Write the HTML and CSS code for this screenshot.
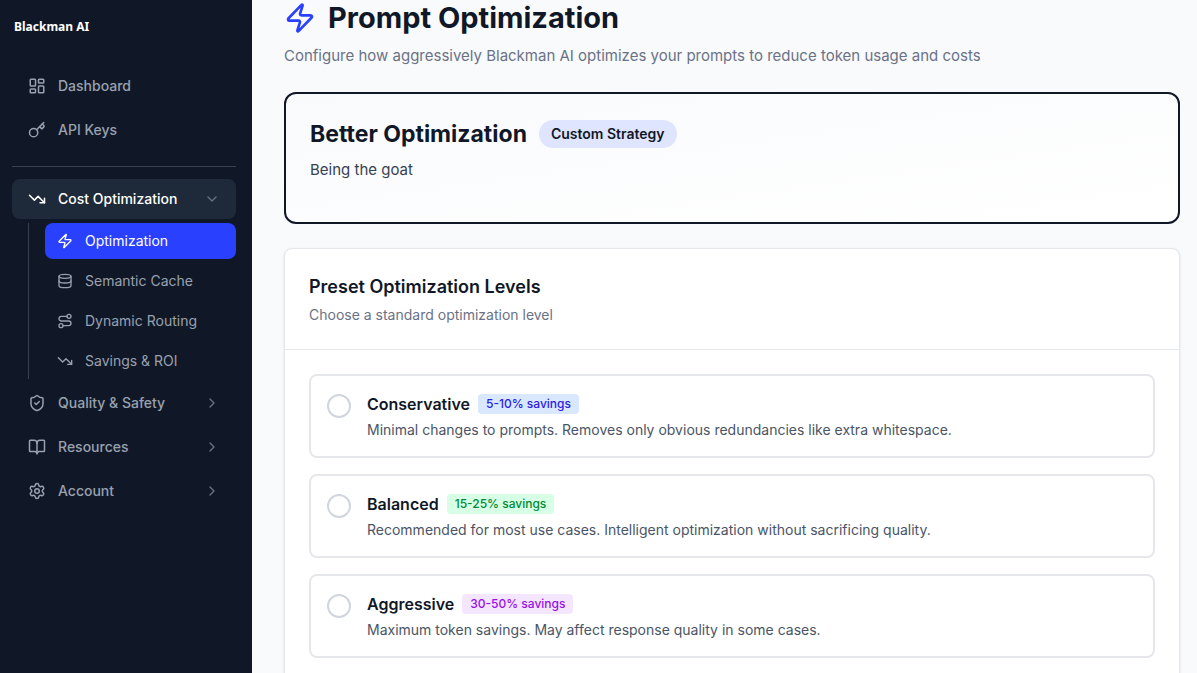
FILE: index.html
```html
<!DOCTYPE html>
<html lang="en">
<head>
<meta charset="utf-8">
<meta name="viewport" content="width=device-width, initial-scale=1">
<title>Prompt Optimization - Blackman AI</title>
<link rel="stylesheet" href="styles.css">
</head>
<body>
<div class="app">
  <aside class="sidebar">
    <a class="brand" href="#">Blackman AI</a>
    <nav class="nav" aria-label="Main">
      <a class="nav-item" href="#">
        <svg class="icon" viewBox="0 0 24 24"><rect x="3" y="3" width="7" height="9" rx="1"/><rect x="14" y="3" width="7" height="5" rx="1"/><rect x="14" y="12" width="7" height="9" rx="1"/><rect x="3" y="16" width="7" height="5" rx="1"/></svg>
        <span>Dashboard</span>
      </a>
      <a class="nav-item" href="#">
        <svg class="icon" viewBox="0 0 24 24"><path d="m15.5 7.5 2.3 2.3a1 1 0 0 0 1.4 0l2.1-2.1a1 1 0 0 0 0-1.4L19 4"/><path d="m21 2-9.6 9.6"/><circle cx="7.5" cy="15.500" r="5.500"/></svg>
        <span>API Keys</span>
      </a>
      <hr class="divider">
      <button class="nav-item open" type="button" aria-expanded="true">
        <svg class="icon" viewBox="0 0 24 24"><path d="M16 17h6v-6"/><path d="m22 17-8.500-8.500-5 5L2 7"/></svg>
        <span>Cost Optimization</span>
        <svg class="icon chevron" viewBox="0 0 24 24"><path d="m6 9 6 6 6-6"/></svg>
      </button>
      <div class="subnav">
        <a class="sub-item active" href="#" aria-current="page">
          <svg class="icon" viewBox="0 0 24 24"><path d="M4 14a1 1 0 0 1-.78-1.630l9.900-10.200a.5.5 0 0 1 .86.46l-1.920 6.020A1 1 0 0 0 13 10h7a1 1 0 0 1 .78 1.630l-9.900 10.200a.5.5 0 0 1-.86-.46l1.920-6.020A1 1 0 0 0 11 14z"/></svg>
          <span>Optimization</span>
        </a>
        <a class="sub-item" href="#">
          <svg class="icon" viewBox="0 0 24 24"><ellipse cx="12" cy="5" rx="9" ry="3"/><path d="M3 5v14a9 3 0 0 0 18 0V5"/><path d="M3 12a9 3 0 0 0 18 0"/></svg>
          <span>Semantic Cache</span>
        </a>
        <a class="sub-item" href="#">
          <svg class="icon" viewBox="0 0 24 24"><circle cx="6" cy="19" r="3"/><path d="M9 19h8.500a3.500 3.500 0 0 0 0-7h-11a3.500 3.500 0 0 1 0-7H15"/><circle cx="18" cy="5" r="3"/></svg>
          <span>Dynamic Routing</span>
        </a>
        <a class="sub-item" href="#">
          <svg class="icon" viewBox="0 0 24 24"><path d="M16 17h6v-6"/><path d="m22 17-8.500-8.500-5 5L2 7"/></svg>
          <span>Savings &amp; ROI</span>
        </a>
      </div>
      <button class="nav-item" type="button" aria-expanded="false">
        <svg class="icon" viewBox="0 0 24 24"><path d="M20 13c0 5-3.500 7.500-7.660 8.950a1 1 0 0 1-.67-.01C7.500 20.500 4 18 4 13V6a1 1 0 0 1 1-1c2 0 4.500-1.200 6.240-2.720a1.170 1.170 0 0 1 1.520 0C14.510 3.810 17 5 19 5a1 1 0 0 1 1 1z"/><path d="m9 12 2 2 4-4"/></svg>
        <span>Quality &amp; Safety</span>
        <svg class="icon chevron" viewBox="0 0 24 24"><path d="m9 18 6-6-6-6"/></svg>
      </button>
      <button class="nav-item" type="button" aria-expanded="false">
        <svg class="icon" viewBox="0 0 24 24"><path d="M12 7v14"/><path d="M3 18a1 1 0 0 1-1-1V4a1 1 0 0 1 1-1h5a4 4 0 0 1 4 4 4 4 0 0 1 4-4h5a1 1 0 0 1 1 1v13a1 1 0 0 1-1 1h-6a3 3 0 0 0-3 3 3 3 0 0 0-3-3z"/></svg>
        <span>Resources</span>
        <svg class="icon chevron" viewBox="0 0 24 24"><path d="m9 18 6-6-6-6"/></svg>
      </button>
      <button class="nav-item" type="button" aria-expanded="false">
        <svg class="icon" viewBox="0 0 24 24"><path d="M9.671 4.136a2.340 2.340 0 0 1 4.659 0 2.340 2.340 0 0 0 3.319 1.915 2.340 2.340 0 0 1 2.330 4.033 2.340 2.340 0 0 0 0 3.831 2.340 2.340 0 0 1-2.330 4.033 2.340 2.340 0 0 0-3.319 1.915 2.340 2.340 0 0 1-4.659 0 2.340 2.340 0 0 0-3.320-1.915 2.340 2.340 0 0 1-2.330-4.033 2.340 2.340 0 0 0 0-3.831A2.340 2.340 0 0 1 6.350 6.051a2.340 2.340 0 0 0 3.319-1.915"/><circle cx="12" cy="12" r="3"/></svg>
        <span>Account</span>
        <svg class="icon chevron" viewBox="0 0 24 24"><path d="m9 18 6-6-6-6"/></svg>
      </button>
    </nav>
  </aside>

  <main class="main">
    <header class="page-header">
      <h1 class="page-title">
        <svg class="icon title-icon" viewBox="0 0 24 24"><path d="M4 14a1 1 0 0 1-.78-1.630l9.900-10.200a.5.5 0 0 1 .86.46l-1.920 6.020A1 1 0 0 0 13 10h7a1 1 0 0 1 .78 1.630l-9.900 10.200a.5.5 0 0 1-.86-.46l1.920-6.020A1 1 0 0 0 11 14z"/></svg>
        <span>Prompt Optimization</span>
      </h1>
      <p class="page-subtitle">Configure how aggressively Blackman AI optimizes your prompts to reduce token usage and costs</p>
    </header>

    <section class="strategy">
      <div class="strategy-heading">
        <h2 class="strategy-title">Better Optimization</h2>
        <span class="pill">Custom Strategy</span>
      </div>
      <p class="strategy-text">Being the goat</p>
    </section>

    <section class="card">
      <header class="card-header">
        <h2 class="card-title">Preset Optimization Levels</h2>
        <p class="card-subtitle">Choose a standard optimization level</p>
      </header>
      <div class="options">
        <label class="option">
          <input class="radio" type="radio" name="level" value="conservative">
          <span class="option-body">
            <span class="option-heading"><span class="option-name">Conservative</span><span class="tag blue">5-10% savings</span></span>
            <span class="option-text">Minimal changes to prompts. Removes only obvious redundancies like extra whitespace.</span>
          </span>
        </label>
        <label class="option">
          <input class="radio" type="radio" name="level" value="balanced">
          <span class="option-body">
            <span class="option-heading"><span class="option-name">Balanced</span><span class="tag green">15-25% savings</span></span>
            <span class="option-text">Recommended for most use cases. Intelligent optimization without sacrificing quality.</span>
          </span>
        </label>
        <label class="option">
          <input class="radio" type="radio" name="level" value="aggressive">
          <span class="option-body">
            <span class="option-heading"><span class="option-name">Aggressive</span><span class="tag purple">30-50% savings</span></span>
            <span class="option-text">Maximum token savings. May affect response quality in some cases.</span>
          </span>
        </label>
      </div>
    </section>
  </main>
</div>
</body>
</html>
```
FILE: styles.css
```css
*, *::before, *::after { box-sizing: border-box; }
body, h1, h2, p, hr { margin: 0; }

body {
  font-family: Inter, "Liberation Sans", sans-serif;
  font-size: 15px;
  line-height: 24px;
  color: #101828;
  background: #f9fafc;
}

.app {
  display: flex;
  height: 100vh;
  overflow: hidden;
}

.icon {
  flex: none;
  width: 16px;
  height: 16px;
  fill: none;
  stroke: currentColor;
  stroke-width: 2;
  stroke-linecap: round;
  stroke-linejoin: round;
}

/* Sidebar */
.sidebar {
  flex: none;
  width: 252px;
  padding: 16px 16px 16px 12px;
  background: #101828;
}
.brand {
  display: block;
  padding-left: 2px;
  font: 700 12px/22px "Noto Sans", sans-serif;
  color: #fff;
  text-decoration: none;
}
.nav {
  display: flex;
  flex-direction: column;
  gap: 4px;
  padding-top: 28px;
}
.nav-item {
  display: flex;
  align-items: center;
  gap: 12px;
  width: 100%;
  height: 40px;
  padding: 0 16px;
  border: 0;
  border-radius: 8px;
  background: none;
  font: 500 14px/20px Inter, sans-serif;
  color: #99a1af;
  text-align: left;
  text-decoration: none;
}
.nav-item > .icon:first-child { width: 18px; height: 18px; }
.nav-item.open { background: #1e2939; color: #fff; }
.nav-item .chevron { margin-left: auto; color: #6a7282; }
.divider {
  width: 100%;
  height: 1px;
  margin: 12px 0 8px;
  border: 0;
  background: #364153;
}
.subnav {
  display: flex;
  flex-direction: column;
  gap: 4px;
  margin-left: 16px;
  padding-left: 16px;
  border-left: 1px solid #364153;
}
.sub-item {
  display: flex;
  align-items: center;
  gap: 12px;
  height: 36px;
  padding: 0 12px;
  border-radius: 8px;
  font-size: 14px;
  line-height: 20px;
  color: #99a1af;
  text-decoration: none;
}
.sub-item.active { background: #2940ff; color: #fff; }

/* Page */
.main {
  flex: 1;
  min-width: 0;
  padding: 0 17px 24px 32px;
}
.page-header { margin-bottom: 24px; }
.page-title {
  display: flex;
  align-items: center;
  gap: 12px;
  margin-bottom: 8px;
  font-size: 29px;
  font-weight: 700;
  line-height: 36px;
}
.title-icon { width: 32px; height: 32px; color: #2940ff; }
.page-subtitle { color: #6a7286; }

.strategy {
  margin-bottom: 24px;
  padding: 24px;
  border: 2px solid #101828;
  border-radius: 12px;
  background: linear-gradient(to bottom right, #f9fafc, #fff);
}
.strategy-heading {
  display: flex;
  align-items: center;
  gap: 12px;
  margin-bottom: 8px;
}
.strategy-title { font-size: 23px; font-weight: 700; line-height: 32px; }
.pill {
  padding: 4px 12px;
  border-radius: 14px;
  background: #e0e5ff;
  font-size: 14px;
  font-weight: 600;
  line-height: 20px;
}
.strategy-text { margin-bottom: 16px; color: #364153; }

.card {
  border: 1px solid #e5e7eb;
  border-radius: 8px;
  background: #fff;
  box-shadow: 0 1px 3px rgba(0, 0, 0, 0.1);
}
.card-header { padding: 24px; border-bottom: 1px solid #e5e7eb; }
.card-title {
  margin-bottom: 4px;
  font-size: 18px;
  font-weight: 600;
  line-height: 28px;
}
.card-subtitle { font-size: 14px; line-height: 20px; color: #6a7286; }

.options {
  display: flex;
  flex-direction: column;
  gap: 16px;
  padding: 24px;
}
.option {
  display: flex;
  align-items: flex-start;
  gap: 16px;
  padding: 16px;
  border: 2px solid #e5e7eb;
  border-radius: 8px;
}
.radio {
  flex: none;
  appearance: none;
  width: 24px;
  height: 24px;
  margin: 2px 0 0;
  border: 2px solid #d1d5dc;
  border-radius: 50%;
  background: #fff;
}
.radio:checked { border: 7px solid #2940ff; }
.option-body { display: flex; flex-direction: column; gap: 4px; }
.option-heading { display: flex; align-items: center; gap: 8px; }
.option-name { font-size: 16px; font-weight: 600; }
.option-text { font-size: 14px; line-height: 20px; color: #4a5565; }
.tag {
  padding: 2px 8px;
  border-radius: 4px;
  font-size: 12px;
  font-weight: 500;
  line-height: 16px;
}
.blue { background: #d9e8ff; color: #2b20e8; }
.green { background: #d6ffe5; color: #008a36; }
.purple { background: #f5e6ff; color: #9810e8; }
```
